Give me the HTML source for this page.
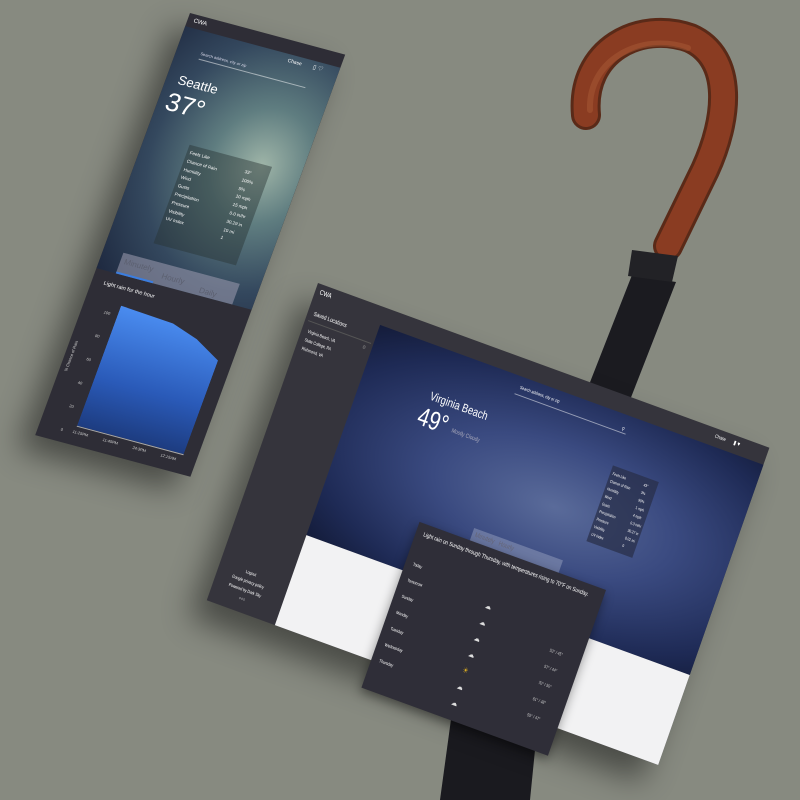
<!DOCTYPE html>
<html><head><meta charset="utf-8"><style>
*{margin:0;padding:0;box-sizing:border-box}
body{width:800px;height:800px;overflow:hidden;background:#878a80;font-family:"Liberation Sans",sans-serif;position:relative}
.abs{position:absolute}
#phone{position:absolute;left:0;top:0;width:160px;height:450px;transform-origin:0 0;transform:matrix(0.97,0.26,-0.344,0.938,190,13);background:#2e2d36;box-shadow:-12px 18px 30px rgba(0,0,0,.45);color:#fff;overflow:hidden}
#tab{position:absolute;left:0;top:0;width:610px;height:335px;transform-origin:0 0;transform:matrix(0.74,0.27,-0.332,0.947,318,283);background:#35343c;box-shadow:-14px 22px 34px rgba(0,0,0,.45);color:#fff}
.t{position:absolute;white-space:nowrap}
</style></head><body>
<svg class="abs" style="left:0;top:0" width="800" height="800">
 <path d="M440 800 L455 690 L540 700 L530 800Z" fill="#1a1a1f"/>
 <path d="M632 275 L676 282 L630 400 L585 395Z" fill="#1b1b20"/>
 <path d="M586 115 C580 50,640 20,690 38 C735 58,728 120,705 170 L668 246" fill="none" stroke="#5a2a18" stroke-width="30" stroke-linecap="round"/>
 <path d="M586 115 C580 50,640 20,690 38 C735 58,728 120,705 170 L668 246" fill="none" stroke="#8a3c22" stroke-width="24" stroke-linecap="round"/>
 <path d="M590 110 C588 60,640 32,688 48" fill="none" stroke="#a85a36" stroke-width="6" stroke-linecap="round" opacity=".5"/>
 <path d="M632 250 L678 256 L672 282 L628 276Z" fill="#222226"/>
</svg>

<div id="phone">
 <div class="abs" style="left:0;top:14px;width:160px;height:258px;background:radial-gradient(ellipse at 75% 45%,#9fb5a8 0%,#5f7d80 30%,#34485e 65%,#1e2940 100%)"></div>
 <div class="t" style="left:6px;top:4px;font-size:6px">CWA</div>
 <div class="t" style="left:108px;top:18px;font-size:5px">Chase</div>
 <div class="t" style="left:134px;top:17px;font-size:6px">▯ ♡</div>
 <div class="t" style="left:24px;top:34px;font-size:4px;color:#dde">Search address, city or zip</div>
 <div class="abs" style="left:24px;top:42px;width:110px;border-top:1px solid rgba(255,255,255,.5)"></div>
 <div class="t" style="left:12px;top:60px;font-size:13px;font-weight:300">Seattle</div>
 <div class="t" style="left:8px;top:76px;font-size:26px">37°</div>
 <div class="abs" style="left:45px;top:128px;width:85px;height:105px;background:rgba(40,50,50,.45)"></div>
 <div class="t" style="left:48px;top:132px;font-size:4.5px;line-height:8.8px">Feels Like<br>Chance of Rain<br>Humidity<br>Wind<br>Gusts<br>Precipitation<br>Pressure<br>Visibility<br>UV Index</div>
 <div class="t" style="left:106px;top:136px;font-size:4.5px;line-height:8.8px">33°<br>100%<br>5%<br>10 mph<br>15 mph<br>0.0 in/hr<br>30.29 in<br>10 mi<br>1</div>
 <div class="abs" style="left:20px;top:250px;width:120px;height:22px;background:rgba(150,150,170,.6)"></div>
 <div class="t" style="left:24px;top:254px;font-size:8px;color:#5c6070">Minutely</div>
 <div class="t" style="left:64px;top:258px;font-size:8px;color:#5c6070">Hourly</div>
 <div class="t" style="left:104px;top:262px;font-size:8px;color:#5c6070">Daily</div>
 <div class="abs" style="left:20px;top:270px;width:38px;height:2px;background:#3a7de0"></div>
 <div class="t" style="left:12px;top:282px;font-size:5.5px">Light rain for the hour</div>
 <div class="abs" style="left:36px;top:302px;width:110px;height:128px;background:linear-gradient(#4a8cf0,#2a5ab8 60%,#1d3c80);clip-path:polygon(0 0,50% 3%,75% 10%,100% 22%,100% 100%,0 100%)"></div>
 <div class="t" style="left:22px;top:300px;font-size:4px;line-height:25px;color:#ccc">100<br>80<br>60<br>40<br>20<br>0</div>
 <div class="t" style="left:4px;top:380px;font-size:4px;color:#ccc;transform:rotate(-90deg);transform-origin:0 0">% Chance of Rain</div>
 <div class="abs" style="left:36px;top:430px;width:110px;border-top:1px solid #aaa"></div>
 <div class="t" style="left:34px;top:434px;font-size:4px;color:#ccc;word-spacing:14px">11:25PM 11:45PM 24:3PM 12:15AM</div>
</div>

<div id="tab">
 <div class="abs" style="left:92px;top:18px;width:518px;height:222px;background:radial-gradient(ellipse at 55% 50%,#5a6b9a 0%,#3a4a80 40%,#1e2a55 80%,#141c3a 100%)"></div>
 <div class="abs" style="left:92px;top:240px;width:518px;height:95px;background:#f2f2f3"></div>
 <div class="t" style="left:6px;top:5px;font-size:7px">CWA</div>
 <div class="t" style="left:8px;top:28px;font-size:6px">Saved Locations</div>
 <div class="abs" style="left:4px;top:38px;width:85px;border-top:1px solid #555"></div>
 <div class="t" style="left:8px;top:44px;font-size:4.5px;line-height:9px">Virginia Beach, VA<br>State College, PA<br>Richmond, VA</div>
 <div class="t" style="left:80px;top:42px;font-size:5px;color:#888">⚙</div>
 <div class="t" style="left:20px;top:290px;font-size:4.5px;line-height:9px;text-align:center">Logout<br>Google privacy policy<br>Powered by Dark Sky<br>○○○</div>
 <div class="t" style="left:286px;top:26px;font-size:4.5px">Search address, city or zip</div>
 <div class="abs" style="left:282px;top:36px;width:150px;border-top:1px solid rgba(255,255,255,.5)"></div>
 <div class="t" style="left:425px;top:30px;font-size:5px">⚲</div>
 <div class="t" style="left:540px;top:5px;font-size:5px">Chase</div>
 <div class="t" style="left:565px;top:4px;font-size:6px">▮ ♥</div>
 <div class="t" style="left:182px;top:60px;font-size:12px;font-weight:300">Virginia Beach</div>
 <div class="t" style="left:176px;top:74px;font-size:26px">49°</div>
 <div class="t" style="left:222px;top:90px;font-size:6px;color:#aab">Mostly Cloudy</div>
 <div class="abs" style="left:430px;top:70px;width:62px;height:80px;background:rgba(40,45,70,.7)"></div>
 <div class="t" style="left:433px;top:74px;font-size:4px;line-height:8px">Feels Like<br>Chance of Rain<br>Humidity<br>Wind<br>Gusts<br>Precipitation<br>Pressure<br>Visibility<br>UV Index</div>
 <div class="t" style="left:475px;top:74px;font-size:4px;line-height:8px">43°<br>3%<br>90%<br>1 mph<br>4 mph<br>0.3 in/hr<br>30.27 in<br>8.01 mi<br>0</div>
 <div class="abs" style="left:290px;top:176px;width:120px;height:18px;background:rgba(150,160,190,.5)"></div>
 <div class="t" style="left:294px;top:179px;font-size:7px;color:#667">Minutely &nbsp; Hourly</div>
 <div class="abs" style="left:222px;top:189px;width:252px;height:175px;background:#2f2e38;box-shadow:0 4px 12px rgba(0,0,0,.4);overflow:hidden"></div>
 <div class="t" style="left:232px;top:196px;font-size:6px;line-height:9px;white-space:normal;width:230px">Light rain on Sunday through Thursday, with temperatures rising to 70°F on Sunday.</div>
 <div class="t" style="left:232px;top:222px;font-size:4.5px;line-height:17px">Today<br>Tomorrow<br>Sunday<br>Monday<br>Tuesday<br>Wednesday<br>Thursday</div>
 <div class="t" style="left:336px;top:236px;font-size:8px;line-height:17px;color:#ddd">☁<br>☁<br>☁<br>☁<br><span style="color:#e0b020">☀</span><br>☁<br>☁</div>
 <div class="t" style="left:432px;top:256px;font-size:4.5px;line-height:17px;color:#ccc">53° / 45°<br>57° / 44°<br>70° / 50°<br>61° / 48°<br>55° / 47°</div>
</div>
</body></html>
